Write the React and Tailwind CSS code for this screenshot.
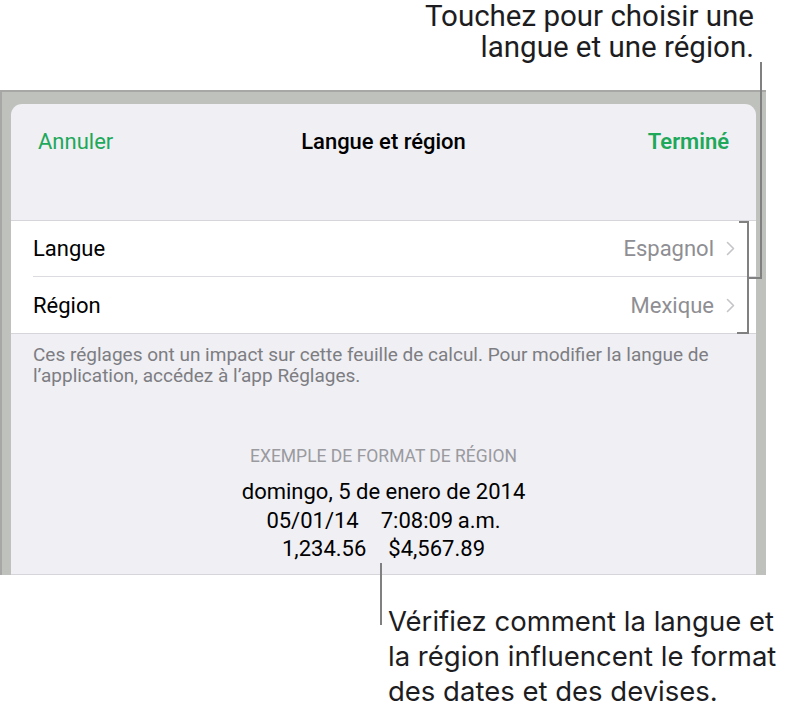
const ROWS = [
  { label: "Langue", value: "Espagnol" },
  { label: "Région", value: "Mexique" },
]

function Chevron() {
  return (
    <svg width="9" height="15" viewBox="0 0 9 15" className="ml-[12px] shrink-0">
      <path d="M1.5 1.5l6 6-6 6" fill="none" stroke="#c4c4c9" strokeWidth="1.6" strokeLinecap="round" strokeLinejoin="round" />
    </svg>
  )
}

function Row({ label, value, last }) {
  return (
    <div className="flex h-[56px] items-center pl-[22px]">
      <div
        className={
          "flex h-full flex-1 items-center pr-[21px] " +
          (last ? "" : "border-b border-[#dcdce0]")
        }
      >
        <span className="flex-1 text-[22px] text-black">{label}</span>
        <span className="text-[22px] text-[#8e8e93]">{value}</span>
        <Chevron />
      </div>
    </div>
  )
}

export default function App() {
  return (
    <div
      className="relative h-[716px] w-[788px] overflow-hidden bg-white"
      style={{ fontFamily: "Roboto, 'Liberation Sans', sans-serif" }}
    >
      {/* top callout */}
      <div className="pr-[34px] pt-[1px] text-right text-[29.5px] leading-[31px] text-[#1d1d1f]">
        <p>Touchez pour choisir une</p>
        <p>langue et une région.</p>
      </div>

      {/* device frame */}
      <div className="mt-[27px] w-[766px] border-l-2 border-t-2 border-[#a7a8a6] bg-[#bfc1bd] px-[9px] pt-[12px] pr-[10px]">
        <div className="h-[471px] overflow-hidden rounded-t-[11px] border-b border-[#d6d6da] bg-[#efeff4]">
          {/* nav bar */}
          <div className="flex h-[74px] items-center px-[27px] text-[22px]">
            <span className="flex-1 text-[#1ea85a]">Annuler</span>
            <span className="font-medium text-black">Langue et région</span>
            <span className="flex-1 text-right font-semibold text-[#1ea85a]">Terminé</span>
          </div>

          <div className="h-[42px]" />

          {/* rows */}
          <div className="border-y border-[#d5d5da] bg-white">
            {ROWS.map((r, i) => (
              <Row key={r.label} {...r} last={i === ROWS.length - 1} />
            ))}
          </div>

          <p className="px-[22px] pt-[10px] text-[19px] leading-[21px] text-[#7d7d82]">
            Ces réglages ont un impact sur cette feuille de calcul. Pour modifier la langue de
            <br />
            l’application, accédez à l’app Réglages.
          </p>

          {/* region example */}
          <div className="mt-[57px] flex flex-col items-center">
            <p className="text-[17.5px] uppercase text-[#9a9a9f]">Exemple de format de région</p>
            <div className="mt-[9px] flex flex-col items-center text-[22px] leading-[28.5px] text-black">
              <p>domingo, 5 de enero de 2014</p>
              <p>
                05/01/14<span className="inline-block w-[22px]" />7:08:09{"\u2009"}a.m.
              </p>
              <p>
                1,234.56<span className="inline-block w-[22px]" />$4,567.89
              </p>
            </div>
          </div>
        </div>
      </div>

      {/* bottom callout */}
      <div
        className="ml-[388px] mt-[29px] text-[27.5px] leading-[35px] text-[#1d1d1f]"
        style={{ fontFamily: "Inter, 'Liberation Sans', sans-serif" }}
      >
        <p>Vérifiez comment la langue et</p>
        <p>la région influencent le format</p>
        <p>des dates et des devises.</p>
      </div>

      {/* callout leader lines */}
      <div className="absolute left-[760px] top-[62px] h-[217px] w-[2px] bg-[#808080]" />
      <div className="absolute left-[749px] top-[277px] h-[2px] w-[12px] bg-[#808080]" />
      <div className="absolute left-[747px] top-[221px] h-[113px] w-[2px] bg-[#808080]" />
      <div className="absolute left-[739px] top-[221px] h-[2px] w-[9px] bg-[#808080]" />
      <div className="absolute left-[737px] top-[332px] h-[2px] w-[11px] bg-[#808080]" />
      <div className="absolute left-[380px] top-[563px] h-[62px] w-[2px] bg-[#808080]" />
    </div>
  )
}
